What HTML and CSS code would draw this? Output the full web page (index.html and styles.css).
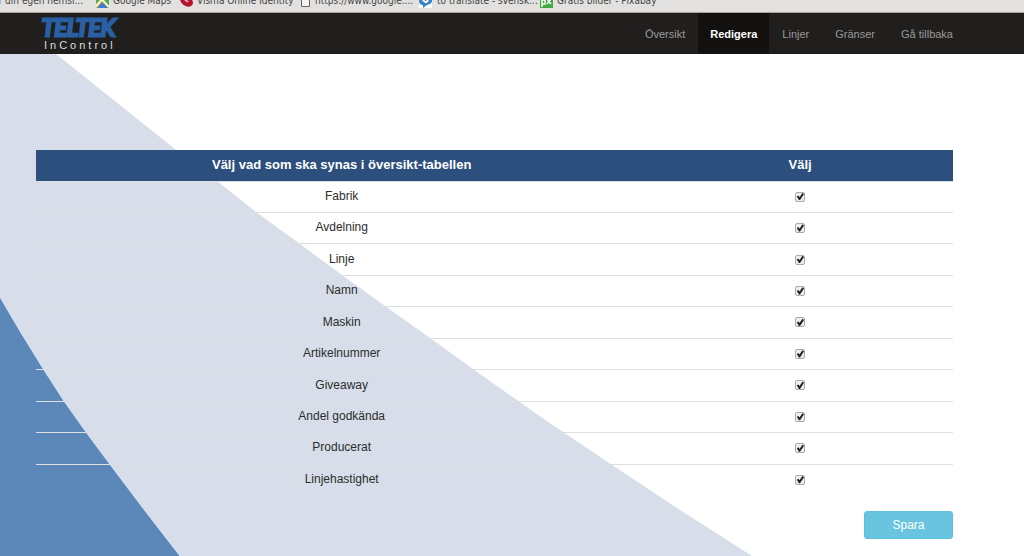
FILE: index.html
```html
<!DOCTYPE html>
<html lang="sv">
<head>
<meta charset="utf-8">
<title>Teltek InControl</title>
<link rel="stylesheet" href="styles.css">
</head>
<body>
<div class="bookmarks">
  <a class="bookmark first" href="#">ör din egen hemsi...</a>
  <a class="bookmark maps" href="#"><svg width="13" height="14" viewBox="0 0 13 14"><rect width="13" height="14" fill="#4caf50"/><path d="M0 14V10L6 5l7 9z" fill="#f3c63a"/><path d="M1 14l5-6 6 6z" fill="#3f79d8"/><path d="M0 12l6-7 7 8" fill="none" stroke="#fff" stroke-width="1.5"/><path d="M8 0h5v7z" fill="#dc4b3e"/></svg>Google Maps</a>
  <a class="bookmark visma" href="#"><svg width="13" height="14" viewBox="0 0 13 14"><ellipse cx="6.500" cy="7" rx="7" ry="5" transform="rotate(35 6.500 7)" fill="#b5122e"/><path d="M3 4l5 4" stroke="#e8a0aa" stroke-width="2"/></svg>Visma Online Identity</a>
  <a class="bookmark page" href="#"><svg width="9" height="14" viewBox="0 0 9 14"><path d="M.5.500h8v12h-8z" fill="#f4f4f4" stroke="#666"/></svg>https://www.google....</a>
  <a class="bookmark translate" href="#"><svg width="13" height="14" viewBox="0 0 13 14"><path d="M0 0h13v14H0z" fill="#fff"/><path d="M0 0h13v8q-2 3-5 3l-4 3v-3Q0 11 0 7z" fill="#3d82c4"/><path d="M4 6q3 4 5 0" fill="none" stroke="#fff" stroke-width="2"/></svg>to translate - svensk...</a>
  <a class="bookmark pixabay" href="#"><svg width="13" height="14" viewBox="0 0 13 14"><path d="M0 0h13v14H0z" fill="#45a943"/><path d="M2 13V6h3v4H2M7 5l4 5M11 5l-4 5" fill="none" stroke="#fff" stroke-width="1.5"/></svg>Gratis bilder - Pixabay</a>
</div>
<header class="navbar">
  <a class="brand" href="#"><span class="brand-name">TELTEK</span><span class="brand-sub">InControl</span></a>
  <nav class="nav">
    <a href="#">Översikt</a>
    <a class="active" href="#" aria-current="page">Redigera</a>
    <a href="#">Linjer</a>
    <a href="#">Gränser</a>
    <a href="#">Gå tillbaka</a>
  </nav>
</header>
<main class="content">
  <svg class="backdrop" width="1024" height="502" viewBox="0 54 1024 502" aria-hidden="true">
    <path d="M0 54H56L175 149L217 181L256 212L300 244L342 275L385 306L430 338L487 379L541 417L609 463L680 510L752 556H0z" fill="#d7dee9"/>
    <path d="M-4 290L0 297Q20 332 44 370L64 401L86 432L109 463Q144 510 180 556L184 561H-4z" fill="#5c88b9" stroke="#d3e4f7" stroke-width="1"/>
  </svg>
  <form class="form">
    <table class="table">
      <thead><tr><th class="name" scope="col">Välj vad som ska synas i översikt-tabellen</th><th scope="col">Välj</th></tr></thead>
      <tbody>
        <tr><td><label for="c1">Fabrik</label></td><td><input id="c1" type="checkbox" checked></td></tr>
        <tr><td><label for="c2">Avdelning</label></td><td><input id="c2" type="checkbox" checked></td></tr>
        <tr><td><label for="c3">Linje</label></td><td><input id="c3" type="checkbox" checked></td></tr>
        <tr><td><label for="c4">Namn</label></td><td><input id="c4" type="checkbox" checked></td></tr>
        <tr><td><label for="c5">Maskin</label></td><td><input id="c5" type="checkbox" checked></td></tr>
        <tr><td><label for="c6">Artikelnummer</label></td><td><input id="c6" type="checkbox" checked></td></tr>
        <tr><td><label for="c7">Giveaway</label></td><td><input id="c7" type="checkbox" checked></td></tr>
        <tr><td><label for="c8">Andel godkända</label></td><td><input id="c8" type="checkbox" checked></td></tr>
        <tr><td><label for="c9">Producerat</label></td><td><input id="c9" type="checkbox" checked></td></tr>
        <tr><td><label for="c10">Linjehastighet</label></td><td><input id="c10" type="checkbox" checked></td></tr>
      </tbody>
    </table>
    <button class="save" type="button">Spara</button>
  </form>
</main>
</body>
</html>
```
FILE: styles.css
```css
* { box-sizing: border-box; }
body {
  margin: 0;
  background: #fff;
  color: #2c2c2c;
  font: 12px/16px "Liberation Sans", Arial, sans-serif;
  overflow-x: hidden;
}
a { color: inherit; text-decoration: none; }

.bookmarks {
  display: flex;
  align-items: flex-end;
  height: 13px;
  padding-bottom: 4px;
  overflow: hidden;
  background: #e2e1df;
  border-bottom: 1px solid #a3a2a0;
  color: #444;
  font: 10px/14px "DejaVu Sans Condensed", "Open Sans", sans-serif;
  white-space: nowrap;
}
.bookmark { display: flex; gap: 4px; flex: none; align-items: flex-end; height: 14px; }
.bookmark svg { flex: none; }
.first { width: 96px; justify-content: flex-end; padding-right: 13px; }
.maps { width: 84px; }
.visma { width: 121px; }
.page { width: 118px; }
.page, .translate { gap: 5px; }
.translate { width: 121px; }

.navbar {
  display: flex;
  justify-content: space-between;
  height: 41px;
  padding: 0 58px 0 36px;
  background: #211f1d;
}
.brand { display: flex; flex-direction: column; padding: 2px 0 0 6px; }
.brand-name {
  color: #2860a3;
  font: italic 23px/24px Lato, "Liberation Sans", sans-serif;
  -webkit-text-stroke: 3px #2860a3;
}
.brand-sub { padding-left: 2px; color: #ddd; font-size: 11px; line-height: 12px; letter-spacing: 3px; }
.nav { display: flex; color: #999; font-size: 11px; }
.nav a { display: flex; align-items: center; padding: 0 13px; }
.nav .active { padding: 0 12px; background: #121110; color: #fff; font-weight: bold; }

.content { position: relative; padding: 96px 71px 18px 36px; }
.backdrop { position: absolute; top: 0; left: 0; }
.form { position: relative; display: flex; flex-direction: column; align-items: flex-end; gap: 16px; }
.table { width: 100%; height: 345px; border-collapse: collapse; text-align: center; }
.table th { height: 31px; padding: 0; background: #2c4f7d; color: #fff; font-size: 13px; }
.table .name { width: 66.67%; }
.table td { padding: 0 0 2px; border-top: 1px solid #dddfe2; }
input[type="checkbox"] {
  display: inline-block;
  appearance: none;
  width: 10px;
  height: 10px;
  margin: 0;
  border: 1px solid #aaa;
  border-radius: 2px;
  background: #eee;
  vertical-align: middle;
}
input[type="checkbox"]:checked::before {
  content: "";
  display: block;
  height: 8px;
  background: #222;
  clip-path: polygon(8% 50%, 28% 38%, 42% 58%, 78% 4%, 98% 18%, 48% 94%, 34% 94%);
}
.save {
  width: 89px;
  height: 28px;
  border: 1px solid #5fbfdb;
  border-radius: 3px;
  background: #69c5df;
  color: #fff;
  font: 12px/16px "Liberation Sans", Arial, sans-serif;
}
```
